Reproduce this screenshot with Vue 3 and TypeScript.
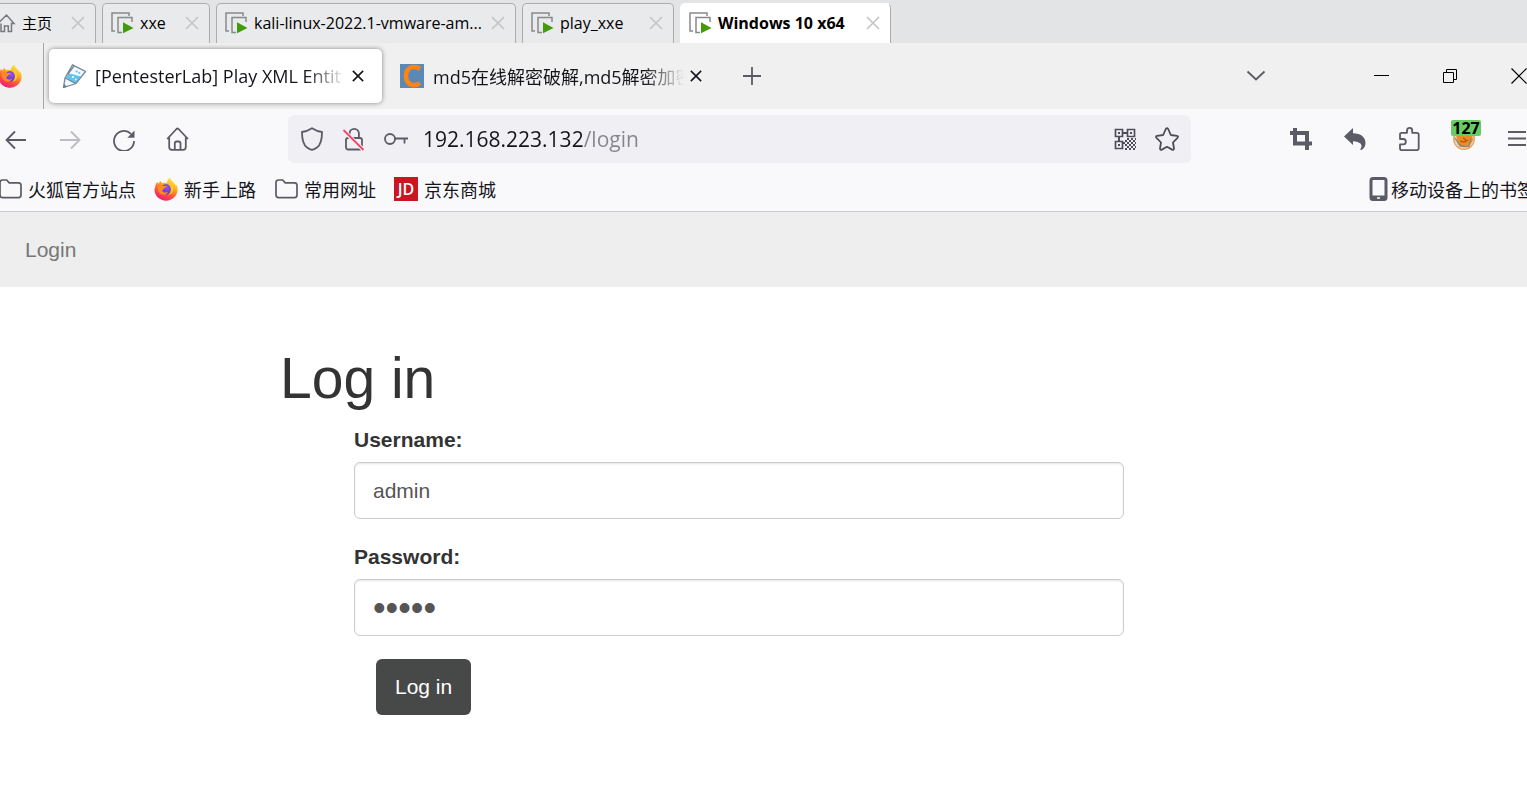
<script setup lang="ts">
import { ref } from 'vue'

interface VmTab {
  title: string
  size: string
  active?: boolean
}

const vmTabs: VmTab[] = [
  { title: 'xxe', size: 'small' },
  { title: 'kali-linux-2022.1-vmware-am...', size: 'wide' },
  { title: 'play_xxe', size: 'medium' },
  { title: 'Windows 10 x64', size: 'large', active: true },
]

const address = ref('192.168.223.132/login')
const username = ref('admin')
const password = ref('admin')
</script>

<template>
  <div class="screen">
    <svg class="defs" width="0" height="0" aria-hidden="true">
      <defs>
        <linearGradient id="flame" x1="0.8" y1="0" x2="0.3" y2="1">
          <stop offset="0" stop-color="#fff14a" />
          <stop offset="0.35" stop-color="#ffb025" />
          <stop offset="0.65" stop-color="#ff5a36" />
          <stop offset="1" stop-color="#f0157a" />
        </linearGradient>
        <radialGradient id="globe" cx="0.6" cy="0.3" r="0.8">
          <stop offset="0" stop-color="#a14df0" />
          <stop offset="1" stop-color="#4b3ac8" />
        </radialGradient>
        <symbol id="firefox" viewBox="0 0 24 24">
          <path fill="url(#flame)" d="M1.2 10c.2-1.700.8-3.400 2-5l1.600 1.700L6 3.700c.8.800 1.500 1.700 2.400 2.500 1.400-.4 2.800-.5 4.400-.2.4-2.300 1.600-4.300 3.400-5.500.3 2.700 2.600 3.900 4.300 6 .7.500 1.200 1.500 1.300 2.300.4-.2.5-.8.5-1.200 1 1.700 1.400 3.600 1.300 5.500-.3 6.100-5.300 10.600-11.400 10.600C5.800 23.700.5 18.800.5 13c0-1 .3-2 .7-3z" />
          <circle cx="12" cy="12.300" r="5.200" fill="url(#globe)" />
          <path fill="#ff8a1e" d="M3.500 9.500c2-1.800 4.600-1.600 6.300-.4l3-.2c-.3 1.300-2 1.500-2.700 2.500-.3 1-1.400 1.100-2 2.100 1.100 2.400 3.900 2.300 5.900 1.500-1.500 3-5.400 3.800-7.700 1.600-1.800-1.700-2.700-4-2.800-7.100z" />
          <path fill="#ffc62c" d="M16.500 5.500c2.500 2 3.800 5 2.500 8.500-.9 2.400-2.500 3.600-4.500 4.100 2.700-2.600 3.300-6.500 1-9.900-1-1-1.300-1.900-1.500-2.700z" />
        </symbol>
        <symbol id="cross" viewBox="0 0 14 14">
          <path d="M1 1l12 12M13 1L1 13" fill="none" stroke="currentColor" />
        </symbol>
        <symbol id="folder" viewBox="0 0 24 24">
          <path d="M2 5.500Q2 3 4.500 3h4.200l2.500 2.800h9.300Q23 5.800 23 8.300v9.800q0 2.500-2.500 2.500h-16Q2 20.600 2 18.100z" fill="none" stroke="#5b5b66" stroke-width="1.700" />
        </symbol>
      </defs>
    </svg>

    <nav class="vm-bar" aria-label="Virtual machines">
      <div class="vm-tab home-tab">
        <button class="vm-pick" type="button">
          <svg width="16" height="20" viewBox="4 0 16 20" fill="none" stroke="#77777c" stroke-width="1.500">
            <path d="M2 10.500L10.500 2l7.500 8.500h-2.500V18.500h-3.200v-5.500H8.500v5.500H5v-8" />
          </svg>
          <span>主页</span>
        </button>
        <button class="vm-close" type="button" aria-label="关闭"><svg width="14" height="14" stroke-width="1.600"><use href="#cross" /></svg></button>
      </div>
      <div v-for="tab in vmTabs" :key="tab.title" class="vm-tab" :class="[tab.size, { active: tab.active }]">
        <button class="vm-pick" type="button">
          <svg width="24" height="24" viewBox="0 0 24 24" fill="none" stroke="#88898b" stroke-width="1.500">
            <path d="M5 20H2V2h17v3" />
            <path d="M12 21.500H8V6.500h14V11" />
            <path d="M13 11.300L23.500 17 13 22.300z" fill="#419b0c" stroke="none" />
          </svg>
          <span>{{ tab.title }}</span>
        </button>
        <button class="vm-close" type="button" aria-label="关闭"><svg width="14" height="14" stroke-width="1.600"><use href="#cross" /></svg></button>
      </div>
    </nav>

    <header class="tab-strip">
      <div class="pinned">
        <svg width="22" height="24" viewBox="2 0 22 24"><use href="#firefox" width="24" height="24" /></svg>
      </div>
      <div class="page-tab current">
        <svg width="24" height="24" viewBox="0 0 24 24" fill="none">
          <path d="M10.500 1L23.500 7.500 14 20 1.500 23.500 3 14z" fill="#f2f8fc" />
          <path d="M6 9.500l5 .8 8 2.200-5 7L9 18 4 13.500z" fill="#62c4ec" />
          <path d="M14 8l1.500-1M16.500 9.500l1.500-1" stroke="#62c4ec" stroke-width="2" />
          <path d="M10 13h2M13 15.500h1.500" stroke="#fff" stroke-width="1.500" />
          <path d="M10.500.8L23.500 7.500 14 19.500 1.500 23.500 3 14zM3 14l5 2.500 6 3M12 2l-6 8" stroke="#74899b" stroke-width="1.300" />
          <path d="M1 24l1-4 3 2.500z" fill="#6d7e8b" />
        </svg>
        <span class="title">[PentesterLab] Play XML Entit</span>
        <button type="button" aria-label="关闭标签页"><svg width="12" height="12" stroke-width="1.800"><use href="#cross" /></svg></button>
      </div>
      <div class="page-tab">
        <svg width="24" height="24" viewBox="0 0 24 24">
          <path d="M0 0h24v24H0z" fill="#5b88b5" />
          <path d="M20 4.800c-7-4-14-1-14 7.200s7 11.500 14 7.200" fill="none" stroke="#ff8412" stroke-width="4.500" />
        </svg>
        <span class="title">md5在线解密破解,md5解密加密</span>
        <button type="button" aria-label="关闭标签页"><svg width="12" height="12" stroke-width="1.800"><use href="#cross" /></svg></button>
      </div>
      <button class="new-tab" type="button" aria-label="新建标签页">
        <svg width="20" height="20" viewBox="0 0 20 20" stroke="#5b5b66" stroke-width="1.800"><path d="M10 1v18M1 10h18" /></svg>
      </button>
      <button class="tab-list" type="button" aria-label="列出标签页">
        <svg width="24" height="24" viewBox="0 0 24 24" fill="none" stroke="#5b5b66" stroke-width="1.800"><path d="M3.500 7.500l8.500 8 8.500-8" /></svg>
      </button>
      <div class="window-buttons">
        <button type="button" aria-label="最小化">
          <svg width="16" height="16" viewBox="0 0 16 16" stroke="#000"><path d="M1 7.500h15" /></svg>
        </button>
        <button type="button" aria-label="还原">
          <svg width="16" height="16" viewBox="0 0 16 16" fill="none" stroke="#000"><path d="M1.500 4.500h10v10h-10zM4.500 4.500v-3h10v10h-3" /></svg>
        </button>
        <button type="button" aria-label="关闭">
          <svg width="16" height="16" viewBox="0 0 16 16" stroke="#000" stroke-width="1.200"><path d="M.5.500l15 15M15.500.500l-15 15" /></svg>
        </button>
      </div>
    </header>

    <div class="toolbar">
      <div class="tools">
        <button type="button" aria-label="后退">
          <svg width="24" height="24" viewBox="0 0 24 24" fill="none" stroke="#5b5b66" stroke-width="1.800"><path d="M22 13H2.500M11 4.500L2.500 13l8.500 8.500" /></svg>
        </button>
        <button type="button" aria-label="前进" disabled>
          <svg width="24" height="24" viewBox="0 0 24 24" fill="none" stroke="#bcbcc1" stroke-width="1.800"><path d="M2 13h19.500M13 4.500l8.500 8.500-8.500 8.500" /></svg>
        </button>
        <button type="button" aria-label="刷新">
          <svg width="24" height="24" viewBox="0 0 24 24" fill="none" stroke="#5b5b66" stroke-width="1.800">
            <path d="M22 14A10 10 0 1 1 19 6.800" /><path d="M22.500 3.500v7.200h-7.200z" fill="#5b5b66" stroke="none" />
          </svg>
        </button>
        <button type="button" aria-label="主页">
          <svg width="24" height="24" viewBox="0 0 24 24" fill="none" stroke="#5b5b66" stroke-width="1.800" stroke-linejoin="round">
            <path d="M1.200 12L10.500 2q1-1 2 0L22 12M3.200 10.500V20q0 2.800 2.800 2.800h11q2.800 0 2.800-2.800v-9.500" />
            <path d="M8.800 22.500v-6q0-2 2-2h1.700q2 0 2 2v6" />
          </svg>
        </button>
      </div>
      <form class="address" @submit.prevent>
        <svg width="24" height="24" viewBox="0 0 24 24" fill="none" stroke="#5b5b66" stroke-width="1.800" stroke-linejoin="round">
          <path d="M12 1.200q5 3.200 10 3.800 0 12-5 15.500-3 2.200-5 2.400-2-.2-5-2.400-5-3.500-5-15.500 5-.6 10-3.800z" />
        </svg>
        <svg width="24" height="24" viewBox="0 0 24 24" fill="none" stroke="#5b5b66" stroke-width="1.800">
          <rect x="4" y="11" width="16" height="11.500" rx="2" /><path d="M7.500 11V6.500a4.700 4.700 0 0 1 9.400 0V11" />
          <path d="M1.500 3.500l20 19.500" stroke="#f0f0f4" stroke-width="4" /><path d="M1.500 3l20 20" stroke="#f7416b" />
        </svg>
        <svg width="24" height="24" viewBox="0 0 24 24" fill="none" stroke="#5b5b66" stroke-width="1.800">
          <circle cx="6" cy="12" r="5" /><path d="M11 11.500h13M20.500 11.500v5" />
        </svg>
        <input v-model="address" type="text" aria-label="地址" spellcheck="false" />
        <button type="button" aria-label="二维码">
          <svg width="24" height="24" viewBox="0 0 24 24" fill="none" stroke="#4d4d57" stroke-width="1.700">
            <path d="M2.500 2.500h7v7h-7zM14.500 2.500h7v7h-7zM2.500 14.500h7v7h-7z" />
            <path d="M5 6h2M17 6h2M5 18h2M10 6h4M6 10v4" stroke-width="2" />
            <path d="M14 12h9M10 16h13M14 20h9" stroke-width="2" stroke-dasharray="2 2" />
            <path d="M12 14h10M12 18h10M12 22h10" stroke-width="2" stroke-dasharray="2 2" />
          </svg>
        </button>
        <button type="button" aria-label="收藏">
          <svg width="24" height="24" viewBox="0 0 24 24" fill="none" stroke="#4d4d57" stroke-width="1.800" stroke-linejoin="round">
            <path d="M10.800 2q1.200-1.500 2.400 0l2.600 6 6.200.8q1.700.5.5 2L18 15.500l1 6q-.2 1.900-1.900 1.100L12 19.800l-5.100 2.800q-1.700.8-1.900-1.100l1-6-4.500-4.700q-1.200-1.500.5-2l6.200-.8z" />
          </svg>
        </button>
      </form>
      <div class="tools">
        <button type="button" aria-label="截图">
          <svg width="24" height="24" viewBox="0 0 24 24" fill="none" stroke="#5b5b66" stroke-width="4"><path d="M1 6h17v17M6 1v15.500h17" /></svg>
        </button>
        <button type="button" aria-label="撤销">
          <svg width="24" height="24" viewBox="0 0 24 24" fill="#5b5b66"><path d="M1 9.500L10 1v5.200c8 0 12.500 4 12.500 9.800 0 3.200-1.600 5.600-4 7-1.100.3-1.300-.5-.8-1.200 2.600-4.300-.7-7.300-7.700-7.600V18z" /></svg>
        </button>
        <button type="button" aria-label="扩展">
          <svg width="24" height="24" viewBox="0 0 24 24" fill="none" stroke="#5b5b66" stroke-width="1.800" stroke-linejoin="round">
            <path d="M3 10V7.500q0-1.700 1.700-1.700H10V3.500a2.600 2.600 0 0 1 5.200 0v2.300h4.600q1.900 0 1.900 1.900v13.600q0 1.900-1.900 1.900H4.700Q3 23.200 3 21.300v-4h3.200a2.600 2.600 0 0 0 0-5.300H3z" />
          </svg>
        </button>
        <button class="fox" type="button" aria-label="代理 127">
          <svg width="24" height="24" viewBox="0 0 24 24">
            <circle cx="13" cy="12" r="10.300" fill="#ddd9d3" stroke="#e9a35b" stroke-width="1.300" />
            <path d="M5 8h16l1 5-4 7H9l-2-3z" fill="#f08a22" />
            <path d="M4 11l4 6q4 4 10 2l2-8" fill="none" stroke="#8a8580" stroke-width="1.300" />
            <path d="M9 14l4 1 4-2M12 11l3 2" stroke="#a9540f" stroke-width="1.200" fill="none" />
          </svg>
          <span class="badge">127</span>
        </button>
        <button class="menu" type="button" aria-label="菜单">
          <svg width="20" height="24" viewBox="0 0 20 24" stroke="#5b5b66" stroke-width="1.800"><path d="M1 5h18M1 11.500h18M1 18h18" /></svg>
        </button>
      </div>
    </div>

    <nav class="bookmarks" aria-label="书签">
      <div class="bookmark-list">
        <a href="#"><svg width="24" height="24"><use href="#folder" /></svg>火狐官方站点</a>
        <a href="#"><svg width="24" height="24"><use href="#firefox" /></svg>新手上路</a>
        <a href="#"><svg width="24" height="24"><use href="#folder" /></svg>常用网址</a>
        <a href="#">
          <svg width="24" height="24" viewBox="0 0 24 24">
            <path d="M0 0h24v24H0z" fill="#c91623" />
            <text x="12" y="18" text-anchor="middle" class="jd">JD</text>
          </svg>京东商城
        </a>
      </div>
      <a class="mobile" href="#">
        <svg width="20" height="24" viewBox="0 0 20 24">
          <rect x="2" y="1.500" width="15" height="21" rx="2" fill="none" stroke="#5b5b66" stroke-width="3" />
          <path d="M2 18.500h15v4H2z" fill="#5b5b66" /><path d="M8 21h3" stroke="#fff" stroke-width="1.500" />
        </svg>移动设备上的书签
      </a>
    </nav>

    <nav class="site-nav"><a href="#">Login</a></nav>

    <main>
      <h1>Log in</h1>
      <form class="login" @submit.prevent>
        <label for="username">Username:</label>
        <input id="username" v-model="username" type="text" />
        <label for="password">Password:</label>
        <input id="password" v-model="password" type="password" />
        <button type="submit">Log in</button>
      </form>
    </main>
  </div>
</template>

<style>
body {
  margin: 0;
  background: #fff;
}
</style>

<style scoped>
.screen {
  overflow: hidden;
  font-family: "Open Sans", "Noto Sans CJK SC", sans-serif;
  color: #15141a;
}
.defs {
  position: absolute;
}
svg {
  display: block;
  flex: none;
}
button {
  display: flex;
  align-items: center;
  justify-content: center;
  padding: 0;
  border: 0;
  background: none;
  font: inherit;
  color: inherit;
}
a {
  color: inherit;
  text-decoration: none;
}

.vm-bar {
  display: flex;
  gap: 6px;
  height: 40px;
  padding-top: 3px;
  background: #e3e4e6;
}
.vm-tab {
  box-sizing: border-box;
  display: flex;
  justify-content: space-between;
  align-items: center;
  flex: none;
  padding: 0 10px 2px 7px;
  border: 1px solid #abacae;
  border-bottom: 0;
  border-radius: 5px 5px 0 0;
  background: #e9eaec;
  font-size: 16px;
  line-height: 22px;
  color: #000;
}
.vm-tab.active {
  background: #fff;
  border-left-color: #fff;
  border-top-color: #fff;
  font-weight: 700;
}
.vm-pick {
  gap: 6px;
  white-space: nowrap;
}
.vm-close {
  color: #c3c4c6;
}
.home-tab {
  width: 96px;
  padding-left: 0;
  border-left: 0;
  border-top-left-radius: 0;
  font-size: 15px;
}
.small {
  width: 108px;
}
.medium {
  width: 152px;
}
.large {
  width: 211px;
}
.wide {
  width: 300px;
}

.tab-strip {
  display: flex;
  align-items: center;
  height: 66px;
  background: #f0f0f0;
}
.pinned {
  display: flex;
  align-items: center;
  align-self: stretch;
  width: 43px;
  margin-right: 5px;
  border-right: 1px solid #a5a5a5;
}
.page-tab {
  box-sizing: border-box;
  display: flex;
  align-items: center;
  width: 333px;
  height: 54px;
  margin-right: 5px;
  padding: 0 18px 0 13px;
  border-radius: 5px;
  font-size: 18px;
}
.page-tab.current {
  background: #fff;
  box-shadow: 0 0 5px rgba(0, 0, 0, 0.45);
}
.title {
  flex: 1;
  min-width: 0;
  margin: 0 6px 0 9px;
  overflow: hidden;
  white-space: nowrap;
  mask-image: linear-gradient(to left, transparent, #000 40px);
}
.new-tab {
  margin-left: 17px;
}
.tab-list {
  margin-left: auto;
}
.window-buttons {
  display: flex;
  gap: 53px;
  margin-left: 105px;
}

.toolbar {
  display: flex;
  align-items: center;
  gap: 94px;
  padding: 6px 0 4px;
  background: #f9f9fb;
}
.tools {
  display: flex;
  gap: 22px;
}
.tools button {
  width: 32px;
  height: 32px;
}
.tools .menu {
  width: 26px;
  justify-content: flex-end;
}
.fox {
  position: relative;
}
.badge {
  position: absolute;
  top: -3px;
  left: 4px;
  width: 30px;
  border-radius: 2px;
  background: #66cc66;
  font-size: 16px;
  font-weight: 700;
  line-height: 16px;
  color: #000;
}
.address {
  display: flex;
  flex: 1;
  align-items: center;
  gap: 18px;
  height: 48px;
  padding: 0 12px;
  border-radius: 6px;
  background: #f0f0f4;
}
.address input {
  flex: 1;
  min-width: 0;
  margin-left: -3px;
  padding: 0;
  border: 0;
  outline: 0;
  background: linear-gradient(to right, #15141a 161px, #85848c 161px) text;
  font: 21px "Open Sans", sans-serif;
  color: transparent;
}

.bookmarks {
  display: flex;
  justify-content: space-between;
  height: 44px;
  border-bottom: 1px solid #ccccce;
  background: #f9f9fb;
  font-size: 18px;
}
.bookmark-list {
  display: flex;
  gap: 18px;
  margin-left: -2px;
}
.bookmarks a {
  display: flex;
  align-items: center;
  gap: 6px;
  white-space: nowrap;
}
.bookmarks .mobile {
  gap: 2px;
  margin-right: -8px;
}
.jd {
  fill: #fff;
  font: 600 16px "Open Sans", sans-serif;
}

.site-nav {
  padding: 23px 25px 22px;
  background: #eee;
  font: 21px/30px "Liberation Sans", Arial, sans-serif;
  color: #777;
}
main {
  padding: 60px 403px 60px 280px;
  font: 21px/30px "Liberation Sans", Arial, sans-serif;
  color: #333;
}
h1 {
  margin: 0 0 15px;
  font-size: 57px;
  font-weight: 400;
  line-height: 63px;
}
.login {
  display: flex;
  flex-direction: column;
  padding-left: 74px;
}
.login label {
  margin-bottom: 7px;
  font-weight: 700;
}
.login input {
  box-sizing: border-box;
  height: 57px;
  margin-bottom: 23px;
  padding: 0 18px;
  border: 1px solid #ccc;
  border-radius: 6px;
  outline: 0;
  box-shadow: inset 0 1px 2px rgba(0, 0, 0, 0.1);
  font: inherit;
  color: #555;
}
.login input[type="password"] {
  font-size: 36px;
}
.login button {
  align-self: flex-start;
  height: 56px;
  margin-left: 22px;
  padding: 0 19px;
  border-radius: 6px;
  background: #474949;
  color: #fff;
}
</style>
